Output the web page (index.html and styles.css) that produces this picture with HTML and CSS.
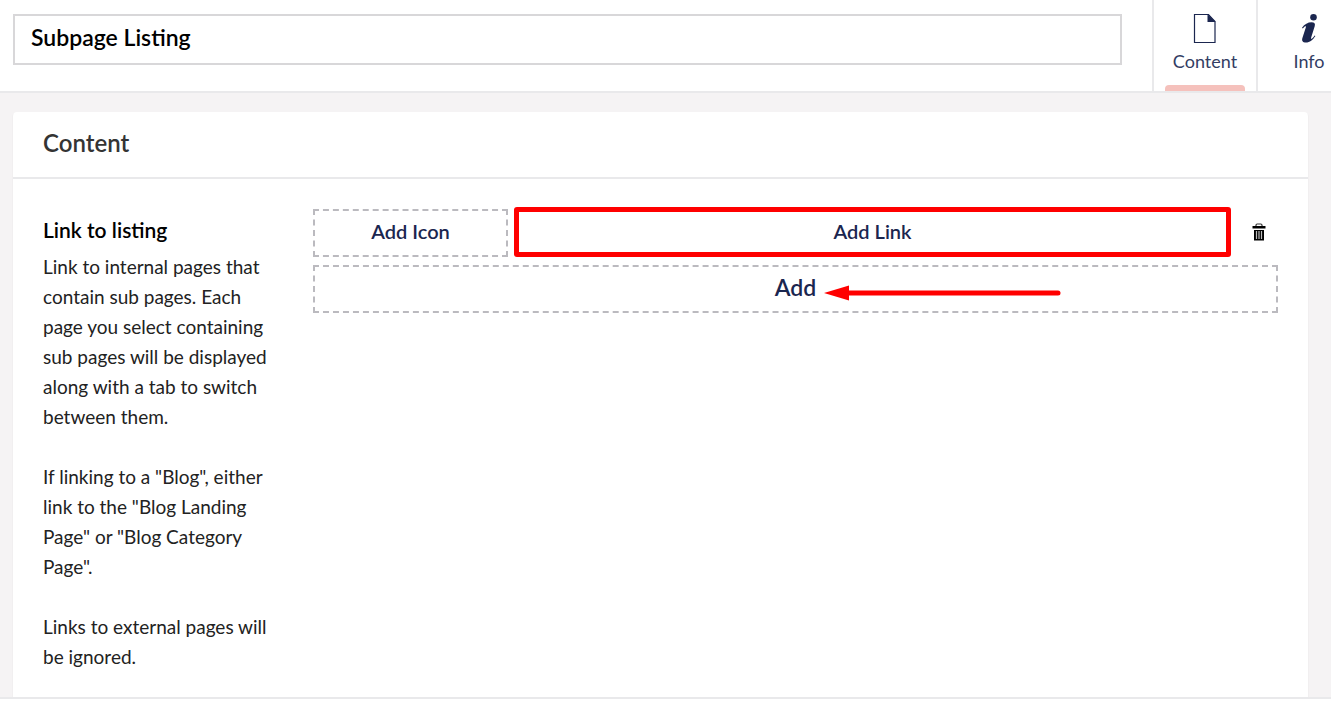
FILE: index.html
```
<!DOCTYPE html>
<html lang="en">
<head>
	<meta charset="utf-8">
	<meta name="viewport" content="width=device-width, initial-scale=1.0">
	<title>Subpage Listing</title>
	<link rel="stylesheet" href="styles.css">
</head>
<body>
	<header class="editor-header">
		<input class="page-name" type="text" value="Subpage Listing" aria-label="Page name">
		<nav class="apps">
			<button type="button" class="app active">
				<svg width="32" height="32" viewBox="0 0 32 32">
					<path d="M5.500 1.500h14l6.500 7v21H5.500z" fill="none" stroke="#1b264f" stroke-width="1.2"/>
					<path d="M18.500 .9L26.600 8.900h-8.100z" fill="#1b264f"/>
				</svg>
				<span>Content</span>
			</button>
			<button type="button" class="app">
				<svg width="32" height="32" viewBox="0 0 32 32">
					<circle cx="20.500" cy="4.300" r="3.300" fill="#1b264f"/>
					<path d="M9 14.800C11.500 11 15 9.200 18.500 9.200c3 0 4 1.600 3.200 4l-3.600 11.600c-.3 1 .1 1.400.9.800 1-.7 1.700-1.900 2.600-3.200l.8.500C20 26.700 16.700 29.500 13 29.500c-3.200 0-4.500-1.800-3.600-4.600l3.400-10.400c.4-1.300-.1-1.700-1.100-1-.7.500-1.300 1.200-1.900 2z" fill="#1b264f"/>
				</svg>
				<span>Info</span>
			</button>
		</nav>
	</header>

	<main class="editor-body">
		<section class="box">
			<h2 class="box-title">Content</h2>
			<div class="property">
				<div class="property-label">
					<h3>Link to listing</h3>
					<p>Link to internal pages that contain sub pages. Each page you select containing sub pages will be displayed along with a tab to switch between them.</p>
					<p>If linking to a "Blog", either link to the "Blog Landing Page" or "Blog Category Page".</p>
					<p>Links to external pages will be ignored.</p>
				</div>
				<div class="property-editor">
					<div class="link-row">
						<button type="button" class="placeholder add-icon">Add Icon</button>
						<button type="button" class="placeholder add-link">Add Link</button>
						<button type="button" class="remove" aria-label="Remove">
							<svg width="14" height="18" viewBox="0 0 14 18">
								<path d="M4 3.500V2.200Q4 1 5.200 1h3.600Q10 1 10 2.200v1.300" fill="none" stroke="#333" stroke-width="1.200"/>
								<path d="M.5 3h13v2.500H.5z"/>
								<path d="M2 7h10v10.500H2z"/>
								<path d="M4.500 8v8M7 8v8M9.500 8v8" stroke="#bbb" stroke-width="1.200"/>
							</svg>
						</button>
					</div>
					<button type="button" class="placeholder add">
						<span class="add-text">Add
							<!-- arrow pointing at the label -->
							<svg class="arrow" width="238" height="16" viewBox="0 0 238 16">
								<path d="M22 8h212" stroke="#f00" stroke-width="5" stroke-linecap="round"/>
								<path d="M0 8L25 .5v15z" fill="#f00"/>
							</svg>
						</span>
					</button>
				</div>
			</div>
		</section>
	</main>

	<footer class="editor-footer"></footer>
</body>
</html>
```

FILE: styles.css
```
* {
	box-sizing: border-box;
}

body {
	margin: 0;
	min-height: 100vh;
	display: flex;
	flex-direction: column;
	background: #f5f3f4;
	color: #000;
	font-family: Lato, "Liberation Sans", sans-serif;
	font-size: 19px;
	line-height: 30px;
}

button {
	margin: 0;
	padding: 0;
	border: none;
	background: none;
	color: #1b264f;
	font-family: inherit;
	cursor: pointer;
}

/* Header */
.editor-header {
	display: flex;
	height: 93px;
	padding-left: 13px;
	background: #fff;
	border-bottom: 2px solid #e9e9eb;
	overflow: hidden;
}

.page-name {
	flex: 1;
	min-width: 0;
	height: 51px;
	margin: 14px 30px 0 0;
	padding: 0 16px 5px;
	border: 2px solid #d8d7d9;
	color: #000;
	font-family: inherit;
	font-size: 23px;
	font-weight: 600;
}

.apps {
	display: flex;
	flex: none;
	/* the last tab runs off the edge */
	margin-right: -29px;
}

.app {
	position: relative;
	display: flex;
	flex-direction: column;
	align-items: center;
	width: 104px;
	padding-top: 13px;
	border-left: 2px solid #e9e9eb;
	font-size: 18px;
	line-height: 32px;
}

.app span {
	color: #333d63;
}

.app.active::after {
	content: "";
	position: absolute;
	left: 11px;
	right: 11px;
	bottom: 0;
	height: 6px;
	border-radius: 4px 4px 0 0;
	background: #f5c1bc;
}

/* Content box */
.editor-body {
	flex: 1;
	display: flex;
	padding: 19px 23px 0 13px;
}

.box {
	flex: 1;
	background: #fff;
	border-radius: 4px 4px 0 0;
	box-shadow: 0 1px 1px rgba(0,0,0,0.16);
}

.box-title {
	margin: 0;
	padding: 16px 30px 19px;
	border-bottom: 2px solid #e9e9eb;
	color: #343434;
	font-size: 24px;
	font-weight: 600;
}

.property {
	display: flex;
	padding: 30px 30px 0;
}

.property-label {
	flex: none;
	width: 230px;
	margin-right: 40px;
}

.property-label h3 {
	margin: 6px 0 7px;
	font-size: 21px;
	font-weight: 600;
}

.property-label p {
	margin: 0 0 30px;
	color: #222;
}

.property-label p:last-child {
	margin-bottom: 23px;
}

.property-editor {
	flex: 1;
	min-width: 0;
}

.link-row {
	display: flex;
	align-items: flex-end;
	margin: -2px 0 8px;
}

.placeholder {
	height: 48px;
	padding-bottom: 4px;
	border: 2px dashed #bbbabf;
	font-size: 20px;
	font-weight: 600;
}

.add-icon {
	width: 195px;
	margin-right: 6px;
}

.add-link {
	flex: 1;
	height: 50px;
	padding-bottom: 2px;
	border: 5px solid #f00;
	border-radius: 3px;
}

.remove {
	display: flex;
	justify-content: center;
	align-items: center;
	width: 39px;
	height: 50px;
	margin: 0 0 0 8px;
}

.add {
	display: block;
	width: 100%;
	font-size: 23px;
}

.add-text {
	position: relative;
}

.arrow {
	position: absolute;
	left: 100%;
	top: 12px;
	margin-left: 8px;
}

/* Footer */
.editor-footer {
	height: 9px;
	background: #fff;
	border-top: 2px solid #e9e9eb;
}
```
